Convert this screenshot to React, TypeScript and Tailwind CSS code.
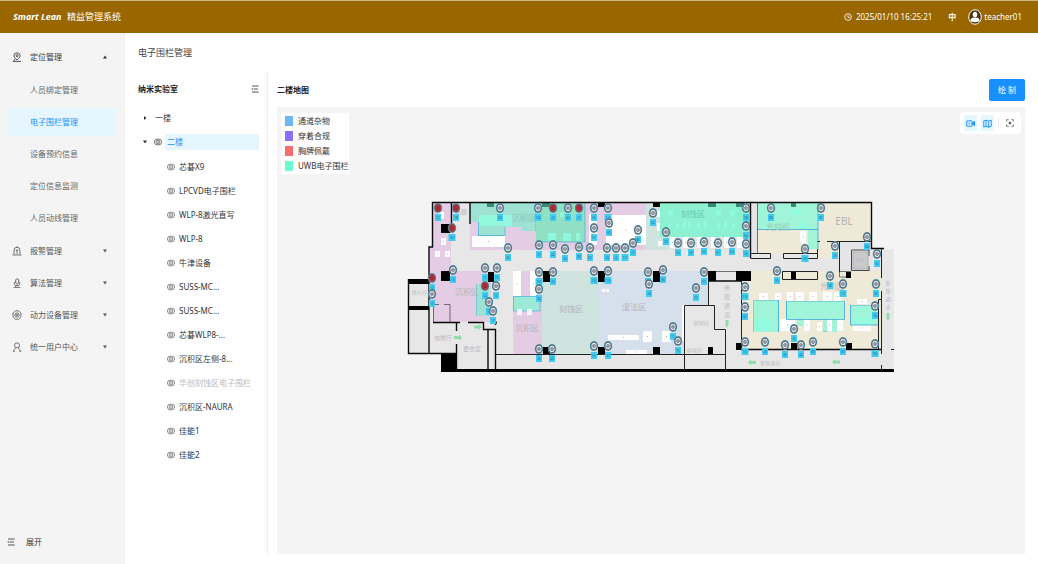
import { useState } from 'react';
import type { ReactNode } from 'react';

type IconProps = { className?: string };

function Glyph({ className = 'size-[10px]', children }: IconProps & { children: ReactNode }) {
  return (
    <svg
      viewBox="0 0 24 24"
      className={`shrink-0 ${className}`}
      fill="none"
      stroke="currentColor"
      strokeWidth="2"
      strokeLinejoin="round"
      aria-hidden="true"
    >
      {children}
    </svg>
  );
}

const LocationIcon = () => (
  <Glyph>
    <path d="M12 19C7 15 4.500 12 4.500 9a7.500 7 0 0 1 15 0c0 3-2.500 6-7.500 10Z" />
    <circle cx="12" cy="9" r="2.500" />
    <path d="M2 22.500h20M7 17l-3 5" />
  </Glyph>
);

const AlarmIcon = () => (
  <Glyph>
    <path d="M5 20V10a7 7 0 0 1 14 0v10M1 21.500h22M12 1v3" />
    <path d="M12 19V9M9 12l3-3 3 3" />
  </Glyph>
);

const AlgorithmIcon = () => (
  <Glyph>
    <path d="M9 3.500 12 2l4 1.500v9L12 15l-3-2.500Z" />
    <path d="M9 8c-4 2-5 8-1 10h7c5-1 5-7 1-9M4 22.500h16M9 18v4" />
  </Glyph>
);

const DeviceIcon = () => (
  <Glyph>
    <path d="M8 2h8l5.500 5.500v9L16 22H8l-5.500-5.500v-9Z" />
    <circle cx="12" cy="12" r="5" />
    <circle cx="12" cy="12" r="1.500" />
  </Glyph>
);

const UserIcon = () => (
  <Glyph>
    <circle cx="12" cy="8" r="6" />
    <path d="M3 22c1-3 4-4 6-8M21 22c-1-3-4-4-6-8M2 22h5M17 22h5" />
  </Glyph>
);

const EyeIcon = () => (
  <Glyph className="size-2">
    <ellipse cx="12" cy="12" rx="11" ry="9" />
    <circle cx="12" cy="12" r="5.500" />
    <circle cx="12" cy="12" r="1" />
  </Glyph>
);

const FoldIcon = () => (
  <Glyph className="size-2">
    <path d="M3 3h20M8 12h13M3 21h20" strokeWidth="2.500" />
    <path d="m1 12 4-3v6Z" fill="currentColor" stroke="none" />
  </Glyph>
);

function Caret({ dir }: { dir: 'up' | 'down' | 'right' }) {
  const shape = { up: 'M0 7 4 1l4 6Z', down: 'M0 1h8L4 7Z', right: 'M2 0l5 4-5 4Z' };
  return (
    <svg viewBox="0 0 8 8" className="size-1 shrink-0" fill="currentColor" aria-hidden="true">
      <path d={shape[dir]} />
    </svg>
  );
}

const groups = [
  {
    label: '定位管理',
    icon: <LocationIcon />,
    children: ['人员绑定管理', '电子围栏管理', '设备预约信息', '定位信息监测', '人员动线管理'],
  },
  { label: '报警管理', icon: <AlarmIcon />, children: [] },
  { label: '算法管理', icon: <AlgorithmIcon />, children: [] },
  { label: '动力设备管理', icon: <DeviceIcon />, children: [] },
  { label: '统一用户中心', icon: <UserIcon />, children: [] },
];

const fences = [
  '芯碁X9', 'LPCVD电子围栏', 'WLP-8激光直写', 'WLP-8', '牛津设备', 'SUSS-MC...', 'SUSS-MC...',
  '芯碁WLP8-...', '沉积区左侧-8...', '华创刻蚀区电子围栏', '沉积区-NAURA', '佳能1', '佳能2',
];

const legend = [
  { label: '通道杂物', color: 'bg-[#6cb6fb]' },
  { label: '穿着合规', color: 'bg-[#8a70fb]' },
  { label: '胸牌佩戴', color: 'bg-[#fb6c6c]' },
  { label: 'UWB电子围栏', color: 'bg-[#6cfbd0]' },
];

// x, y, width, height
type Box = [number, number, number, number];

const desks: Box[] = [
  [441, 238, 5, 7], [435, 251, 5, 6], [445, 251, 5, 6], [438, 212, 6, 7], [472, 236, 33, 11],
  [513, 271, 8, 26], [530, 271, 7, 26], [606, 215, 40, 30], [589, 214, 8, 31],
  [602, 289, 3, 3], [606, 289, 3, 3], [608, 335, 31, 5], [643, 331, 9, 11], [626, 350, 21, 4],
  [662, 331, 9, 11], [682, 305, 2, 36], [657, 211, 4, 6], [657, 223, 4, 8], [658, 241, 4, 5],
  [670, 237, 5, 11], [683, 237, 5, 11], [697, 237, 5, 11], [711, 237, 5, 11], [724, 237, 5, 11],
  [737, 237, 6, 11], [800, 231, 6, 12], [759, 293, 9, 7], [775, 293, 6, 7], [787, 292, 6, 9],
  [796, 292, 8, 9], [809, 292, 8, 9], [823, 292, 9, 9], [834, 292, 7, 9], [780, 319, 15, 12],
  [804, 319, 6, 12], [817, 322, 5, 9], [827, 319, 5, 12], [837, 319, 6, 12], [857, 299, 10, 5],
  [853, 325, 18, 6],
];

const fenceDesks: Box[] = [
  [479, 215, 33, 11], [548, 233, 8, 8], [563, 233, 8, 8], [576, 233, 4, 8], [560, 212, 4, 5],
  [668, 210, 5, 6], [716, 210, 5, 6], [730, 210, 5, 6], [668, 223, 3, 6], [676, 223, 3, 6],
  [683, 221, 3, 7], [688, 221, 3, 7], [697, 223, 3, 6], [704, 221, 3, 7], [717, 223, 3, 6],
  [724, 221, 3, 7], [732, 223, 3, 6], [792, 210, 10, 5], [800, 222, 8, 7], [755, 319, 17, 12],
  [854, 318, 18, 6],
];

const columns: Box[] = [
  [441, 224, 9, 9], [441, 271, 9, 10], [488, 272, 6, 10], [543, 271, 7, 11], [598, 271, 7, 11],
  [653, 271, 7, 11], [708, 271, 8, 10], [736, 271, 15, 10], [598, 203, 7, 4], [653, 203, 7, 4],
  [543, 347, 7, 8], [598, 347, 7, 8], [653, 347, 7, 8], [708, 347, 5, 7], [736, 343, 5, 7],
  [791, 343, 6, 7], [846, 343, 6, 7], [846, 272, 5, 6], [791, 271, 5, 8], [441, 354, 15, 18],
  [408, 279, 21, 5], [408, 306, 21, 4], [441, 369, 453, 3],
];

const beams: Box[] = [[487, 203, 7, 4], [542, 203, 8, 4], [708, 203, 8, 4], [736, 203, 8, 4], [791, 203, 5, 4]];

// x, y, label, alarm
const pins: [number, number, string, boolean?][] = [
  [438, 208, '22', true], [456, 208, '18', true], [452, 228, '107', true], [500, 208, '26'],
  [508, 248, '45'], [453, 270, '16'], [485, 268, '11'], [497, 268, '15'], [432, 278, '13', true],
  [485, 286, '14', true], [496, 286, '12'], [432, 294, '19'], [489, 302, '10'], [493, 311, '17'],
  [538, 208, '104'], [553, 208, '23', true], [568, 208, '43'], [579, 208, '21', true],
  [594, 208, '50'], [608, 208, '114'], [653, 213, '62'], [609, 223, '60'], [594, 228, '51'],
  [638, 230, '89'], [633, 243, '57'], [539, 245, '31'], [553, 245, '42'], [565, 249, '35'],
  [579, 247, '88'], [590, 248, '55'], [607, 248, '24'], [616, 248, '4'], [625, 248, '112'],
  [539, 272, '103'], [553, 272, '33'], [539, 289, '34'], [594, 271, '102'], [608, 271, '113'],
  [648, 272, '27'], [649, 284, '74'], [539, 349, '36'], [552, 349, '40'], [594, 346, '53'],
  [608, 346, '37'], [666, 232, '69'], [678, 243, '52'], [691, 243, '59'], [704, 242, '63'],
  [718, 243, '67'], [732, 242, '54'], [746, 244, '56'], [746, 208, '58'], [746, 226, '64'],
  [771, 208, '80'], [663, 270, '66'], [704, 272, '61'], [696, 288, '72'], [673, 327, '71'],
  [678, 341, '75'], [745, 287, '110'], [745, 307, '82'], [745, 342, '101'], [765, 342, '28'],
  [777, 271, '55'], [821, 208, '81'], [867, 237, '84'], [805, 249, '109'], [835, 246, '29'],
  [877, 254, '92'], [830, 276, '38'], [843, 284, '111'], [876, 284, '96'], [875, 306, '94'],
  [794, 329, '8'], [785, 345, '30'], [801, 345, '44'], [813, 342, '83'], [843, 342, '87'],
  [875, 344, '105'],
];

function Boxes({ items }: { items: Box[] }) {
  return (
    <>
      {items.map(([x, y, w, h]) => (
        <rect key={`${x}-${y}`} x={x} y={y} width={w} height={h} />
      ))}
    </>
  );
}

function FloorPlan() {
  return (
    <svg viewBox="277 107 748 447" className="block h-full w-full" role="img" aria-label="二楼地图">
      {/* floor */}
      <path d="M432 202H872V249H894V372H441V354H408V280H429V247H432Z" fill="#e7e7e7" />
      <g fill="#e4cde4">
        <path d="M433 203H451V271H491V322H433V306H429V247H433Z" />
        <path d="M470 203H646V250H470ZM513 271H542V354H513Z" />
      </g>
      <path d="M646 203H750V250H646ZM542 271H598V354H542Z" fill="#cfe3df" />
      <path d="M598 271H708V305H684V354H598Z" fill="#d6e0ec" />
      <path d="M757 203H872V241H839V258H818V253H757ZM742 271H881V349H742Z" fill="#efe9d8" />
      <path d="M840 242H871V271H840ZM670 237H750V250H670ZM751 203H757V253H751Z" fill="#e4e4e6" />

      <g fill="#fff">
        <Boxes items={desks} />
      </g>
      <g fill="#b4b4b8">
        {desks.filter(d => d[2] > 4).map(([x, y, w, h]) => (
          <rect key={`${x}-${y}`} x={x + w / 2 - 0.5} y={y + h / 2 - 0.5} width="1" height="1" />
        ))}
      </g>

      {/* fenced areas */}
      <g fill="#a0f4d7">
        <path d="M470 203H535V231H522V227H505V236H478V222H470Z" fill="#9ee2d3" />
        <path d="M536 203H585V242H536Z" fill="#90e0c5" />
        <path d="M660 203H750V237H660Z" fill="#8cf0d1" />
        <path d="M757 203H818V249H808V229H757Z" />
        <path d="M513 296H540V311H513Z" fill="#9ce9d8" />
        <path d="M476 284H489V316H476Z" fill="#9ee2d3" />
        <path d="M753 300H779V332H753Z" />
        <path d="M786 301H844V319H837V332H832V319H827V332H823V319H804V326H797V319H786Z" />
        <path d="M850 305H878V325H850Z" />
      </g>
      <g stroke="#3aa5d8" fill="none">
        <path d="M478.500 222V235.500H505V227M536.500 242H585V203M513.500 296.500H540V311H513.500Z" strokeWidth="0.600" />
        <path d="M757 229.500H818M818 203V249M844.500 301V319.500H786.500V301M850.500 305V325H878M778.500 300V332" strokeWidth="0.800" />
        <path d="M786 301.500H844M850 305.500H877M753.500 332V300.500H779M823 331.500H827M535.500 203V231M476.500 284V316" strokeWidth="0.400" />
      </g>
      <g fill="#8fffe0" fillOpacity="0.75">
        <Boxes items={fenceDesks} />
      </g>
      <path d="M517 309h5v6h-5ZM527 309h5v6h-5Z" fill="#fff" fillOpacity="0.8" />

      {/* walls */}
      <g>
        <Boxes items={columns} />
      </g>
      <g fill="#3c8a78">
        <Boxes items={beams} />
      </g>
      <g stroke="#0a0a0a" fill="none" strokeWidth="1.400">
        <path d="M429 354V247H432.500V202.500H871.500V248.500H884M408.500 279V353.500H456" />
        <path d="M451.500 203V224M470 203V224M433 322.500H460M468 322.500H484M456.500 322V331M456.500 344V370" />
        <path d="M483.500 322V329.500H496M495.500 322V325M495.500 329V370M488 330V370M493 322.500H497" />
        <path d="M708.500 281H742M741.500 343V349.500H882M750.500 203V258" />
      </g>
      <g stroke="#222" fill="none">
        <path d="M496 354.500H726M708.500 281V305.500H684.500V370M708 305.500H714.500V329.500H725.500V370M741.500 281V349" />
        <path d="M750.500 253.500H770.500V258.500H750.500M783.500 253.500H817.500V258.500H783.500ZM782.500 271.500H817.500V279.500H782.500Z" />
        <path d="M817.500 249V258M817.500 241.500H820M827 241.500H872M839.500 241V272M881.500 249V278M881.500 291V354M878.500 349V299.500H881M881.500 365V370M891 349.500H894" />
        <path d="M757.500 203V253M839 271.500H851M839.500 271V277H846M716 271.500H736M433.500 322V304.500H439M444 304.500H450V322" strokeWidth="0.600" />
      </g>
      <path d="M869 250H851.500V270.500H869M869 250V256M869 266V271" fill="none" stroke="#444" />
      <rect x="853" y="252" width="15" height="17" fill="#cacacc" stroke="#999" strokeWidth="0.600" />

      <g fill="#b4b4b8" fontSize="8" textAnchor="middle">
        <text x="467" y="295">沉积区</text>
        <text x="524" y="221" fill="#8cc5b9">沉积区</text>
        <text x="527" y="331">沉积区</text>
        <text x="571" y="312">刻蚀区</text>
        <text x="634" y="310">湿法区</text>
        <text x="693" y="217" fill="#6cc9b0">刻蚀区</text>
        <text x="778" y="230" fill="#9cc9bb">光刻机</text>
        <text x="832" y="289">光刻区</text>
        <text x="844" y="225" fontSize="10">EBL</text>
        <text x="461" y="214" fontSize="6">走廊</text>
      </g>
      <g fill="#bcbcc0" fontSize="6" textAnchor="middle">
        <text x="443" y="340">电梯厅</text>
        <text x="472" y="351">更衣室</text>
        <text x="419" y="294" fontSize="5">储水间</text>
        <text x="770" y="365" fontSize="5">参观通道</text>
        <text x="701" y="325" fontSize="5">管理间</text>
        <text x="694" y="352" fontSize="5">弱电间</text>
        <text x="860" y="262" fontSize="4">电梯</text>
        {['参', '观', '通', '道'].map((char, i) => (
          <text key={char} x="727" y={290 + i * 9}>{char}</text>
        ))}
        {['参', '观', '通', '道'].map((char, i) => (
          <text key={char} x="888" y={285 + i * 8} fontSize="5">{char}</text>
        ))}
      </g>
      <g fill="#8fdcaa">
        <path d="M474 325.500h5v-1.500l3 3-3 3v-1.500h-5ZM454 336h5v-1.500l3 3-3 3v-1.500h-5Z" />
        <path d="M756 361h-5v-1.500l-3 3 3 3v-1.500h5ZM840 360.500h-5v-1.500l-3 3 3 3v-1.500h5Z" />
        <path d="M725.500 320h3v5l-1.500 3-1.500-3ZM886.500 313h3v5l-1.500 3-1.500-3Z" />
      </g>

      {/* cameras */}
      {pins.map(([x, y, label, alarm]) => (
        <g key={`${x}-${y}`}>
          <rect x={x - (label.length > 2 ? 3.5 : 3)} y={y + 6} width={label.length > 2 ? 7 : 6} height="7" fill="#41cbee" />
          <text x={x} y={y + 11} fontSize="3" textAnchor="middle" fill="#1c6f9c">{label}</text>
          <ellipse cx={x} cy={y} rx="4.200" ry="5" fill="#4f8ea4" />
          <ellipse cx={x} cy={y} rx="3.300" ry="4" fill={alarm ? '#8a4a56' : '#56626e'} />
          <ellipse cx={x} cy={y} rx="2.600" ry="3.200" fill={alarm ? '#b8323a' : '#dfe4ea'} />
          <circle cx={x} cy={y} r="1.700" fill={alarm ? '#8c1a22' : '#56606c'} />
          <circle cx={x} cy={y} r="0.700" fill={alarm ? '#d0575b' : '#fff'} />
        </g>
      ))}
    </svg>
  );
}

function Header() {
  return (
    <header className="flex h-[33px] items-center border-t border-[#cdb88a] bg-[#996600] pr-4 pl-[13px] text-white">
      <span className="w-[54px] text-[9px] font-bold whitespace-nowrap italic">Smart Lean</span>
      <h1 className="text-[9px]">精益管理系统</h1>
      <div className="ml-auto flex items-center">
        <svg viewBox="0 0 24 24" className="mr-1 size-2" fill="none" stroke="currentColor" strokeWidth="2.500" aria-hidden="true">
          <circle cx="12" cy="12" r="10" />
          <path d="M12 6v7h6" />
        </svg>
        <time>2025/01/10 16:25:21</time>
        <button className="ml-4 font-bold">中</button>
        <button className="ml-3 flex items-center gap-0.5">
          <svg viewBox="0 0 28 32" className="h-4 w-3.5" aria-hidden="true">
            <ellipse cx="14" cy="16" rx="12.500" ry="14.500" fill="#4a3510" stroke="#fff" strokeWidth="2" />
            <ellipse cx="14" cy="11" rx="4.500" ry="5.500" fill="#fff" />
            <path d="M5 24c0-6 4-7 9-7s9 1 9 7c-3 3-15 3-18 0Z" fill="#fff" />
          </svg>
          teacher01
        </button>
      </div>
    </header>
  );
}

function Sidebar({ page, onSelect }: { page: string; onSelect: (p: string) => void }) {
  return (
    <nav className="flex w-[125px] shrink-0 flex-col bg-[#f4f4f4] px-[7px] pt-[10px] text-[#555]">
      <ul className="flex flex-col gap-1">
        {groups.map(({ label, icon, children }) => (
          <li key={label}>
            <button className={`flex h-7 w-full items-center pr-1 pl-[5px] ${children.length ? 'text-[#333]' : ''}`}>
              {icon}
              <span className="ml-2">{label}</span>
              <span className="mr-[7px] ml-auto"><Caret dir={children.length ? 'up' : 'down'} /></span>
            </button>
            {children.length > 0 && (
              <ul className="my-[5px] mb-px flex flex-col gap-1">
                {children.map(child => (
                  <li key={child}>
                    <button
                      onClick={() => onSelect(child)}
                      className={`flex h-7 w-[109px] items-center rounded pl-[23px] ${page === child ? 'bg-[#e6f6ff] text-[#1890ff]' : 'text-[#666]'}`}
                    >
                      {child}
                    </button>
                  </li>
                ))}
              </ul>
            )}
          </li>
        ))}
      </ul>
      <button className="mt-auto mb-3 flex h-5 items-center gap-[11px] text-[#333]">
        <FoldIcon />
        展开
      </button>
    </nav>
  );
}

function FenceTree() {
  return (
    <section className="w-[130px] shrink-0 border-r border-[#eee] pt-[7px] text-[#333]">
      <div className="flex h-5 items-center justify-between pr-2">
        <h3 className="font-bold text-[#222]">纳米实验室</h3>
        <button aria-label="收起"><FoldIcon /></button>
      </div>
      <ul className="mt-[11px] flex flex-col gap-2 pl-[5px]">
        <li>
          <button className="flex h-4 items-center gap-2">
            <Caret dir="right" />
            一楼
          </button>
        </li>
        <li>
          <div className="flex h-4 items-center">
            <Caret dir="down" />
            <button className="mx-[7px]" aria-label="显示二楼"><EyeIcon /></button>
            <button className="-ml-1 mr-2 h-4 flex-1 bg-[#e6f6ff] pl-0.5 text-left text-[#1890ff]">二楼</button>
          </div>
          <ul className="mt-[9px] flex flex-col gap-2 pl-6">
            {fences.map((name, i) => (
              <li key={i}>
                <button className={`flex h-4 items-center gap-1 whitespace-nowrap ${i === 9 ? 'text-[#bbb]' : ''}`}>
                  <span className="text-[#555]"><EyeIcon /></span>
                  {name}
                </button>
              </li>
            ))}
          </ul>
        </li>
      </ul>
    </section>
  );
}

function MapToolbar() {
  return (
    <div className="absolute top-[5px] right-1 flex h-[22px] items-center rounded-sm bg-white px-1 text-[#1890ff]">
      <button aria-label="摄像头" className="grid h-4 w-[13px] place-items-center bg-[#e6f6ff]">
        <Glyph className="size-[9px]">
          <path d="M2 5h14v14H2Z" strokeWidth="2.500" />
          <path d="M17 10l6-4v12l-6-4Z" fill="currentColor" />
          <circle cx="9" cy="12" r="1.500" />
        </Glyph>
      </button>
      <button aria-label="地图" className="ml-1 grid h-4 w-[13px] place-items-center bg-[#e6f6ff]">
        <Glyph className="size-[9px]">
          <path d="M2 5l6-2 7 3 7-3v16l-7 3-7-3-6 3ZM8 3v16M15 6v16" strokeWidth="2.500" />
        </Glyph>
      </button>
      <span className="mx-1 h-3 w-px bg-[#eee]" />
      <button aria-label="全屏" className="mr-px grid h-4 w-[13px] place-items-center text-[#444]">
        <Glyph className="size-2">
          <path d="M2 8V2h6M16 2h6v6M22 16v6h-6M8 22H2v-6" />
          <circle cx="12" cy="12" r="3" fill="currentColor" />
        </Glyph>
      </button>
    </div>
  );
}

export default function App() {
  const [page, setPage] = useState('电子围栏管理');

  return (
    <div className="flex min-h-screen flex-col bg-white font-['Noto_Sans','Noto_Sans_CJK_SC',sans-serif] text-[8px] leading-3">
      <Header />
      <div className="flex flex-1">
        <Sidebar page={page} onSelect={setPage} />
        <main className="flex min-w-0 flex-1 flex-col pr-[13px] pb-[10px] pl-[13px]">
          <h2 className="flex h-[39px] items-center text-[9px] text-[#444]">{page}</h2>
          <div className="flex min-h-0 flex-1">
            <FenceTree />
            <section className="flex min-w-0 flex-1 flex-col pl-[9px]">
              <div className="flex h-[35px] items-center justify-between">
                <h3 className="font-bold text-[#222]">二楼地图</h3>
                <button className="h-[22px] w-9 rounded-xs bg-[#1890ff] text-white">绘 制</button>
              </div>
              <div className="relative flex-1 bg-[#f4f4f4]">
                <FloorPlan />
                <ul className="absolute top-[6px] left-1 flex flex-col gap-[3px] bg-white py-0.5 pl-1 text-[#333]">
                  {legend.map(({ label, color }) => (
                    <li key={label} className="flex items-center gap-[5px]">
                      <span className={`h-[10px] w-2 ${color}`} />
                      {label}
                    </li>
                  ))}
                </ul>
                <MapToolbar />
              </div>
            </section>
          </div>
        </main>
      </div>
    </div>
  );
}
